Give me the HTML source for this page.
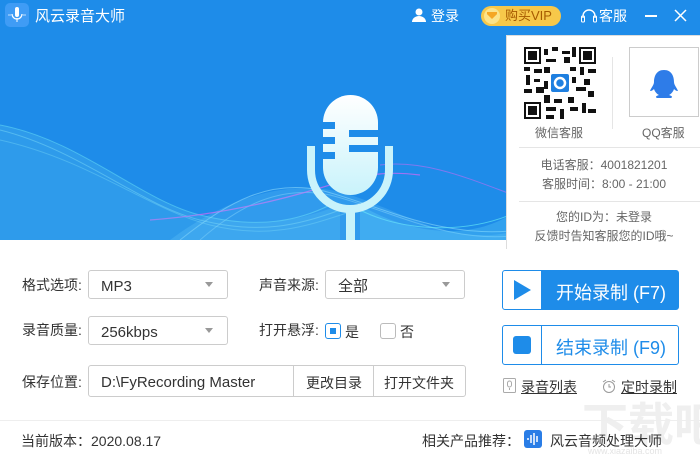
<!DOCTYPE html>
<html><head><meta charset="utf-8"><style>
*{margin:0;padding:0;box-sizing:border-box}
body{width:700px;height:460px;position:relative;overflow:hidden;background:#fff;font-family:"Liberation Sans","Noto Sans CJK SC",sans-serif;color:#333;font-size:14px}
.a{position:absolute}
.banner{left:0;top:0;width:700px;height:240px;background:#1e8ce9;overflow:hidden}
.sel{position:absolute;height:29px;border:1px solid #ccc;border-radius:3px;background:#fff;font-size:15px;line-height:27px;padding-left:12px;color:#333}
.sel span{position:relative;top:2px}
.sel:after{content:"";position:absolute;right:14px;top:11px;border-left:4px solid transparent;border-right:4px solid transparent;border-top:5px solid #999}
.lbl{position:absolute;font-size:14px;color:#333;white-space:nowrap}
.pop{left:506px;top:35px;width:194px;height:214px;background:#fff;border-left:1px solid #ddd;border-top:1px solid #ddd}
.pt{position:absolute;width:194px;text-align:center;font-size:12px;color:#666;left:0}
</style></head><body>
<div class="a" style="left:582px;top:400px;font-size:46px;color:#efefef;font-weight:bold;white-space:nowrap;line-height:50px">下载吧</div>
<div class="a" style="left:588px;top:446px;font-size:9px;color:#e4e4e4;white-space:nowrap">www.xiazaiba.com</div>
<div class="a banner">
<svg width="700" height="240" style="position:absolute;left:0;top:0">
<defs>
<linearGradient id="mg" x1="0" y1="0" x2="0" y2="1"><stop offset="0" stop-color="#fff"/><stop offset="1" stop-color="#c9f3fb"/></linearGradient>
</defs>
<g fill="none" stroke-width="1">
<path d="M0 125 C80 140 140 200 200 215 C260 230 300 220 330 205" stroke="#5fd8f5" opacity=".6"/>
<path d="M0 130 C80 150 140 205 200 220 C260 235 300 225 340 210" stroke="#7fe0f8" opacity=".5"/>
<path d="M0 140 C90 160 150 210 210 225 C270 240 310 225 350 212" stroke="#7fe0f8" opacity=".4"/>
<path d="M180 240 C230 200 270 180 320 190 C380 205 440 240 520 230" stroke="#9fe7ff" opacity=".5"/>
<path d="M200 240 C240 205 280 185 330 195 C390 210 450 245 520 235" stroke="#9fe7ff" opacity=".4"/>
<path d="M150 220 C220 215 280 200 320 188 C360 176 380 170 420 175" stroke="#c06cf5" opacity=".8" stroke-width="1.2"/>
<path d="M380 165 C420 160 460 175 500 190 C530 200 560 230 600 230" stroke="#c06cf5" opacity=".6"/>
<path d="M360 210 C400 230 460 235 510 215 C520 205 520 185 510 170" stroke="#5fe6f5" opacity=".7"/>
</g>
<path d="M0 125 C80 140 140 200 200 215 C260 230 300 220 340 205 L340 240 L0 240Z" fill="#5fc8f5" opacity=".25"/>
<path d="M170 240 C230 195 290 180 340 192 C400 208 450 250 520 230 L520 240Z" fill="#7fd8ff" opacity=".2"/>
<path d="M360 205 C410 235 470 240 510 215 L510 240 L360 240Z" fill="#6fe0ff" opacity=".25"/>
<rect x="323" y="95" width="55" height="100" rx="27.5" fill="url(#mg)"/>
<g fill="#1e8ce9"><rect x="323" y="122" width="12" height="7"/><rect x="323" y="137" width="12" height="7"/><rect x="323" y="152" width="12" height="7"/>
<rect x="349" y="130" width="29" height="7"/><rect x="349" y="145" width="29" height="7"/></g>
<path d="M311 146 V170 A39 39 0 0 0 389 170 V146" fill="none" stroke="#c9f3fb" stroke-width="8"/>
<rect x="346" y="208" width="9" height="32" fill="#c9f3fb"/>
</svg>
<div class="a" style="left:5px;top:3px;width:24px;height:24px;border-radius:5px;background:#3f9cf5"><svg width="24" height="24"><rect x="10" y="4" width="4" height="10" rx="2" fill="#fff"/><path d="M7 11 a5 5 0 0 0 10 0" fill="none" stroke="#fff" stroke-width="1.2"/><rect x="11.5" y="15" width="1" height="4" fill="#fff"/><path d="M3 12h3M18 12h3" stroke="#bfe0ff"/></svg></div>
<div class="a" style="left:35px;top:5px;color:#fff;font-size:15px">风云录音大师</div>
<svg class="a" style="left:412px;top:8px" width="14" height="14"><circle cx="7" cy="4" r="3.5" fill="#fff"/><path d="M0 14 a7 6 0 0 1 14 0Z" fill="#fff"/></svg>
<div class="a" style="left:431px;top:6px;color:#fff;font-size:14px">登录</div>
<div class="a" style="left:481px;top:6px;width:80px;height:20px;border-radius:10px;background:#f7c84a;color:#a65a00;font-size:13px;line-height:20px;padding-left:24px">购买VIP</div>
<div class="a" style="left:484px;top:8px;width:16px;height:16px;border-radius:8px;background:#fbe38a"><div style="position:absolute;left:3px;top:4px;width:10px;height:7px;background:#f5a623;clip-path:polygon(0 0,100% 0,100% 30%,50% 100%,0 30%)"></div></div>
<svg class="a" style="left:580px;top:8px" width="18" height="16"><path d="M3 10 V8 a6 6 0 0 1 12 0 V10" fill="none" stroke="#fff" stroke-width="1.4"/><rect x="1.5" y="8" width="3" height="6" rx="1" fill="none" stroke="#fff"/><rect x="13.5" y="8" width="3" height="6" rx="1" fill="none" stroke="#fff"/></svg>
<div class="a" style="left:599px;top:6px;color:#fff;font-size:14px">客服</div>
<div class="a" style="left:645px;top:15px;width:12px;height:1.5px;background:#fff"></div>
<svg class="a" style="left:674px;top:9px" width="13" height="13"><path d="M1 1L12 12M12 1L1 12" stroke="#fff" stroke-width="1.5"/></svg>
</div>

<div class="a pop">
<svg class="a" style="left:17px;top:11px" width="72" height="72"><rect width="72" height="72" fill="#fff"/>
<g fill="#111"><rect x="0" y="0" width="17" height="17"/><rect x="55" y="0" width="17" height="17"/><rect x="0" y="55" width="17" height="17"/></g>
<g fill="#fff"><rect x="2" y="2" width="13" height="13"/><rect x="57" y="2" width="13" height="13"/><rect x="2" y="57" width="13" height="13"/></g>
<g fill="#111"><rect x="4" y="4" width="9" height="9"/><rect x="59" y="4" width="9" height="9"/><rect x="4" y="59" width="9" height="9"/>
<rect x="20" y="2" width="4" height="6"/><rect x="28" y="0" width="6" height="4"/><rect x="38" y="4" width="8" height="3"/><rect x="48" y="0" width="4" height="10"/><rect x="22" y="12" width="10" height="3"/><rect x="40" y="10" width="6" height="6"/>
<rect x="0" y="20" width="6" height="4"/><rect x="10" y="22" width="8" height="4"/><rect x="2" y="28" width="4" height="10"/><rect x="10" y="32" width="6" height="3"/><rect x="0" y="42" width="8" height="4"/><rect x="12" y="40" width="8" height="6"/>
<rect x="20" y="20" width="6" height="6"/><rect x="46" y="20" width="6" height="4"/><rect x="56" y="20" width="4" height="8"/><rect x="64" y="22" width="8" height="4"/><rect x="60" y="32" width="6" height="6"/><rect x="52" y="40" width="10" height="4"/><rect x="64" y="44" width="6" height="6"/>
<rect x="20" y="48" width="6" height="8"/><rect x="30" y="52" width="8" height="4"/><rect x="22" y="60" width="10" height="4"/><rect x="36" y="62" width="4" height="10"/><rect x="44" y="50" width="6" height="6"/><rect x="46" y="60" width="8" height="4"/><rect x="58" y="56" width="4" height="10"/><rect x="64" y="62" width="8" height="4"/><rect x="22" y="68" width="8" height="4"/><rect x="20" y="34" width="4" height="8"/><rect x="48" y="30" width="4" height="6"/></g>
<rect x="27" y="27" width="18" height="18" rx="2" fill="#1e7fe0"/><circle cx="36" cy="36" r="5" fill="none" stroke="#fff" stroke-width="2.5"/></svg>
<div class="a" style="left:105px;top:21px;width:1px;height:72px;background:#e5e5e5"></div>
<div class="a" style="left:122px;top:11px;width:70px;height:70px;border:1px solid #ccc"><svg width="68" height="68"><path d="M34 22 c-8 0 -10 7 -10 12 c0 3 -3 6 -4 9 c2 0 3 -1 4 -2 c1 3 3 5 5 6 c-3 1 -4 2 -2 3 h14 c2 -1 1 -2 -2 -3 c2 -1 4 -3 5 -6 c1 1 2 2 4 2 c-1 -3 -4 -6 -4 -9 c0 -5 -2 -12 -10 -12Z" fill="#2e7ce8"/></svg></div>
<div class="a" style="left:28px;top:88px;font-size:12px;color:#666">微信客服</div>
<div class="a" style="left:135px;top:88px;font-size:12px;color:#666">QQ客服</div>
<div class="a" style="left:12px;top:111px;width:182px;height:1px;background:#e5e5e5"></div>
<div class="pt" style="top:120px">电话客服：4001821201</div>
<div class="pt" style="top:139px">客服时间：8:00 - 21:00</div>
<div class="a" style="left:12px;top:165px;width:182px;height:1px;background:#e5e5e5"></div>
<div class="pt" style="top:172px">您的ID为：未登录</div>
<div class="pt" style="top:191px">反馈时告知客服您的ID哦~</div>
</div>

<div class="lbl" style="left:22px;top:275px">格式选项:</div>
<div class="sel" style="left:88px;top:270px;width:140px"><span>MP3</span></div>
<div class="lbl" style="left:259px;top:275px">声音来源:</div>
<div class="sel" style="left:325px;top:270px;width:140px"><span>全部</span></div>
<div class="lbl" style="left:22px;top:320px">录音质量:</div>
<div class="sel" style="left:88px;top:316px;width:140px"><span>256kbps</span></div>
<div class="lbl" style="left:259px;top:320px">打开悬浮:</div>
<div class="a" style="left:325px;top:323px;width:16px;height:16px;border:1px solid #1e8ce9;border-radius:3px"><div style="margin:4px;width:6px;height:6px;background:#1e8ce9"></div></div>
<div class="lbl" style="left:345px;top:322px">是</div>
<div class="a" style="left:380px;top:323px;width:16px;height:16px;border:1px solid #bbb;border-radius:3px"></div>
<div class="lbl" style="left:400px;top:322px">否</div>
<div class="lbl" style="left:22px;top:372px">保存位置:</div>
<div class="a" style="left:88px;top:365px;width:378px;height:32px;border:1px solid #ccc;border-radius:3px;font-size:15px;line-height:30px;padding-left:12px"><span style="position:relative;top:2px">D:\FyRecording Master</span></div>
<div class="a" style="left:293px;top:366px;width:1px;height:30px;background:#ccc"></div>
<div class="a" style="left:373px;top:366px;width:1px;height:30px;background:#ccc"></div>
<div class="lbl" style="left:306px;top:373px">更改目录</div>
<div class="lbl" style="left:384px;top:373px">打开文件夹</div>

<div class="a" style="left:502px;top:270px;width:177px;height:40px;background:#1e8ce9;border:1px solid #1e8ce9;border-radius:3px"></div>
<div class="a" style="left:503px;top:271px;width:38px;height:38px;background:#fff;border-radius:2px 0 0 2px"><div style="position:absolute;left:11px;top:9px;border-left:17px solid #1e8ce9;border-top:10px solid transparent;border-bottom:10px solid transparent"></div></div>
<div class="a" style="left:556px;top:279px;color:#fff;font-size:18px;white-space:nowrap">开始录制 (F7)</div>
<div class="a" style="left:502px;top:325px;width:177px;height:40px;border:1px solid #1e8ce9;border-radius:3px"></div>
<div class="a" style="left:541px;top:326px;width:1px;height:38px;background:#1e8ce9"></div>
<div class="a" style="left:513px;top:336px;width:18px;height:18px;background:#1e8ce9;border-radius:3px"></div>
<div class="a" style="left:556px;top:334px;color:#1e8ce9;font-size:18px;white-space:nowrap">结束录制 (F9)</div>
<svg class="a" style="left:503px;top:378px" width="13" height="15"><rect x=".5" y=".5" width="12" height="14" rx="1" fill="none" stroke="#aaa"/><rect x="4.5" y="3" width="4" height="6" rx="2" fill="none" stroke="#aaa"/><path d="M6.5 10v2" stroke="#aaa"/></svg>
<div class="a" style="left:521px;top:377px;font-size:14px;text-decoration:underline">录音列表</div>
<svg class="a" style="left:602px;top:379px" width="14" height="14"><circle cx="7" cy="8" r="5.5" fill="none" stroke="#999"/><path d="M7 5v3h2M1 3l3-2M13 3l-3-2" stroke="#999" fill="none"/></svg>
<div class="a" style="left:621px;top:377px;font-size:14px;text-decoration:underline">定时录制</div>

<div class="a" style="left:0;top:420px;width:700px;height:1px;background:#eee"></div>
<div class="a" style="left:21px;top:431px;font-size:14px">当前版本：2020.08.17</div>
<div class="a" style="left:422px;top:431px;font-size:14px">相关产品推荐：</div>
<div class="a" style="left:524px;top:430px;width:18px;height:18px;background:#2a7de6;border-radius:3px"><svg width="18" height="18"><path d="M4 8v2M7 5v8M10 3v12M13 6v6" stroke="#fff" stroke-width="1.5"/></svg></div>
<div class="a" style="left:550px;top:431px;font-size:14px;white-space:nowrap">风云音频处理大师</div>
</body></html>
